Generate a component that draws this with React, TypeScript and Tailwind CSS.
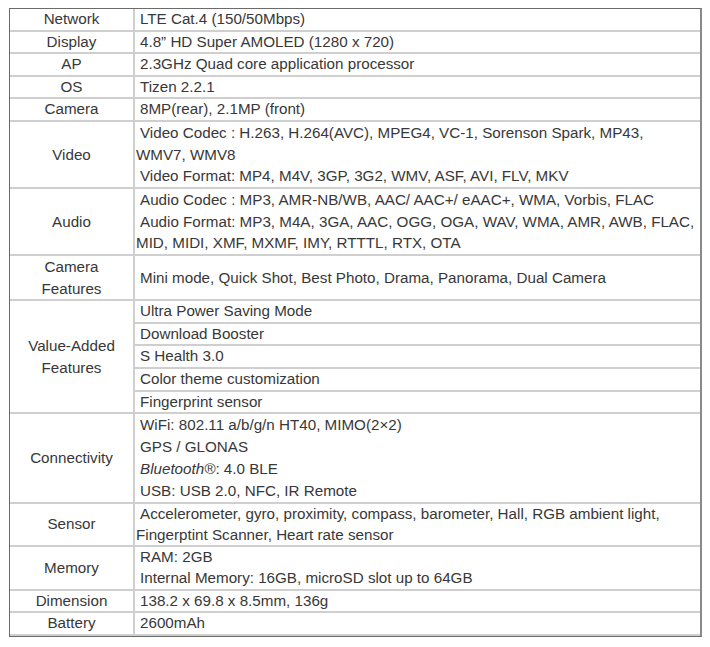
const font = { fontFamily: '"Liberation Sans", Arial, sans-serif' }

type Row = { label: string[]; lines: React.ReactNode[]; lh?: string }

const rows: Row[] = [
  { label: ['Network'], lines: ['LTE Cat.4 (150/50Mbps)'] },
  { label: ['Display'], lines: ['4.8” HD Super AMOLED (1280 x 720)'] },
  { label: ['AP'], lines: ['2.3GHz Quad core application processor'] },
  { label: ['OS'], lines: ['Tizen 2.2.1'] },
  { label: ['Camera'], lines: ['8MP(rear), 2.1MP (front)'] },
  {
    label: ['Video'],
    lh: 'leading-[21.7px]',
    lines: [
      <>
        Video Codec : H.263, H.264(AVC), MPEG4, VC-1, Sorenson Spark, MP43,
        <br />
        WMV7, WMV8
      </>,
      'Video Format: MP4, M4V, 3GP, 3G2, WMV, ASF, AVI, FLV, MKV',
    ],
  },
  {
    label: ['Audio'],
    lh: 'leading-[21.7px]',
    lines: [
      'Audio Codec : MP3, AMR-NB/WB, AAC/ AAC+/ eAAC+, WMA, Vorbis, FLAC',
      <>
        Audio Format: MP3, M4A, 3GA, AAC, OGG, OGA, WAV, WMA, AMR, AWB, FLAC,
        <br />
        MID, MIDI, XMF, MXMF, IMY, RTTTL, RTX, OTA
      </>,
    ],
  },
  {
    label: ['Camera', 'Features'],
    lh: 'leading-[21.5px]',
    lines: ['Mini mode, Quick Shot, Best Photo, Drama, Panorama, Dual Camera'],
  },
]

const valueAdded = [
  'Ultra Power Saving Mode',
  'Download Booster',
  'S Health 3.0',
  'Color theme customization',
  'Fingerprint sensor',
]

const rowsAfter: Row[] = [
  {
    label: ['Connectivity'],
    lh: 'leading-[22px]',
    lines: [
      'WiFi: 802.11 a/b/g/n HT40, MIMO(2×2)',
      'GPS / GLONAS',
      <>
        <i>Bluetooth®</i>: 4.0 BLE
      </>,
      'USB: USB 2.0, NFC, IR Remote',
    ],
  },
  {
    label: ['Sensor'],
    lines: [
      <>
        Accelerometer, gyro, proximity, compass, barometer, Hall, RGB ambient light,
        <br />
        Fingerptint Scanner, Heart rate sensor
      </>,
    ],
  },
  {
    label: ['Memory'],
    lines: ['RAM: 2GB', 'Internal Memory: 16GB, microSD slot up to 64GB'],
  },
  { label: ['Dimension'], lines: ['138.2 x 69.8 x 8.5mm, 136g'] },
  { label: ['Battery'], lines: ['2600mAh'] },
]

const labelCls =
  'w-[124px] border-r-2 border-b-2 border-[#cfcfcf] text-center align-middle px-1'
const valueCls = 'border-b-2 border-[#cfcfcf] pl-px pr-1 align-middle'

function SpecRow({ row, last }: { row: Row; last?: boolean }) {
  return (
    <tr className={row.lh}>
      <td className={`${labelCls} ${last ? 'border-b-0' : ''}`}>
        {row.label.map((l) => (
          <div key={l}>{l}</div>
        ))}
      </td>
      <td className={`${valueCls} ${last ? 'border-b-0' : ''}`}>
        {row.lines.map((l, i) => (
          <div key={i} className="indent-[4px]">
            {l}
          </div>
        ))}
      </td>
    </tr>
  )
}

export default function App() {
  return (
    <div className="min-h-[647px] w-[710px] bg-white pl-[9px] pt-[8px]" style={font}>
      <div className="w-[693px] border border-[#6b6b6b] border-r-2 border-r-[#8a8a8a]">
        <table className="w-full border-collapse text-[15.2px] leading-[20.6px] text-[#383838]">
          <tbody>
            {rows.map((r) => (
              <SpecRow key={r.label.join(' ')} row={r} />
            ))}
            {valueAdded.map((v, i) => (
              <tr key={v}>
                {i === 0 && (
                  <td rowSpan={5} className={`${labelCls} leading-[21.5px]`}>
                    <div>Value-Added</div>
                    <div>Features</div>
                  </td>
                )}
                <td className={valueCls}>
                  <div className="indent-[4px]">{v}</div>
                </td>
              </tr>
            ))}
            {rowsAfter.map((r, i) => (
              <SpecRow key={r.label.join(' ')} row={r} last={i === rowsAfter.length - 1} />
            ))}
          </tbody>
        </table>
      </div>
    </div>
  )
}
